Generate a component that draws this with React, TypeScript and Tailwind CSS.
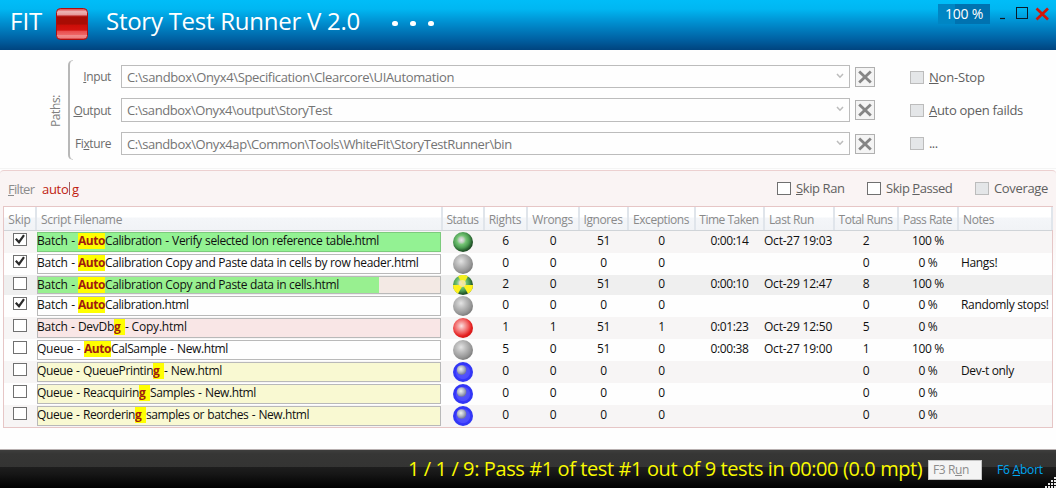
import type { ReactNode } from "react";

type Orb = "green" | "gray" | "hazard" | "red" | "blue";

interface Row {
  skip: boolean;
  pre: string;
  preCls: string;
  hit: string;
  hitCls: string;
  post: string;
  postCls: string;
  fill: string;
  box: string;
  orb: Orb;
  rights: number;
  wrongs: number;
  ignores: number;
  exceptions: number;
  time: string;
  last: string;
  total: number;
  rate: string;
  notes: string;
  bg: string;
  h: string;
}

const AUTO = "w-[27px] tracking-[-0.45px]";
const G = "w-[11px]";
const BATCH = "w-[41px] tracking-[-0.25px] [word-spacing:0.8px]";
const PLAIN = "border-[#b9b9b9] bg-[#fefefe]";
const YELLOW = "border-[#b9b9b9] bg-[#f9f9d2]";

const rows: Row[] = [
  { skip: true, pre: "Batch - ", preCls: BATCH, hit: "Auto", hitCls: AUTO, post: "Calibration - Verify selected Ion reference table.html", postCls: "tracking-[-0.39px] [word-spacing:0.7px]", fill: "", box: "border-[#7ccb7c] bg-[#93f293]", orb: "green", rights: 6, wrongs: 0, ignores: 51, exceptions: 0, time: "0:00:14", last: "Oct-27 19:03", total: 2, rate: "100 %", notes: "", bg: "bg-[#f7f5f5]", h: "h-[22px]" },
  { skip: true, pre: "Batch - ", preCls: BATCH, hit: "Auto", hitCls: AUTO, post: "Calibration Copy and Paste data in cells by row header.html", postCls: "tracking-[-0.32px]", fill: "", box: PLAIN, orb: "gray", rights: 0, wrongs: 0, ignores: 0, exceptions: 0, time: "", last: "", total: 0, rate: "0 %", notes: "Hangs!", bg: "bg-[#fefefe]", h: "h-[22px]" },
  { skip: false, pre: "Batch - ", preCls: BATCH, hit: "Auto", hitCls: AUTO, post: "Calibration Copy and Paste data in cells.html", postCls: "tracking-[-0.32px]", fill: "w-[341px]", box: "border-[#b9b9b9] bg-[#f3e9e4]", orb: "hazard", rights: 2, wrongs: 0, ignores: 51, exceptions: 0, time: "0:00:10", last: "Oct-29 12:47", total: 8, rate: "100 %", notes: "", bg: "bg-[#efefef]", h: "h-[20px]" },
  { skip: true, pre: "Batch - ", preCls: BATCH, hit: "Auto", hitCls: AUTO, post: "Calibration.html", postCls: "tracking-[-0.4px]", fill: "", box: PLAIN, orb: "gray", rights: 0, wrongs: 0, ignores: 0, exceptions: 0, time: "", last: "", total: 0, rate: "0 %", notes: "Randomly stops!", bg: "bg-[#fefefe]", h: "h-[22px]" },
  { skip: false, pre: "Batch - DevDb", preCls: "w-[77px] tracking-[-0.25px] [word-spacing:0.5px]", hit: "g ", hitCls: G, post: "- Copy.html", postCls: "tracking-[-0.2px]", fill: "", box: "border-[#b9b9b9] bg-[#f9e6e6]", orb: "red", rights: 1, wrongs: 1, ignores: 51, exceptions: 1, time: "0:01:23", last: "Oct-29 12:50", total: 5, rate: "0 %", notes: "", bg: "bg-[#f7f5f5]", h: "h-[22px]" },
  { skip: false, pre: "Queue - ", preCls: "w-[47px] tracking-[-0.25px] [word-spacing:0.7px]", hit: "Auto", hitCls: AUTO, post: "CalSample - New.html", postCls: "tracking-[-0.37px] [word-spacing:0.8px]", fill: "", box: PLAIN, orb: "gray", rights: 5, wrongs: 0, ignores: 51, exceptions: 0, time: "0:00:38", last: "Oct-27 19:00", total: 1, rate: "100 %", notes: "", bg: "bg-[#fefefe]", h: "h-[22px]" },
  { skip: false, pre: "Queue - QueuePrintin", preCls: "w-[116px] tracking-[-0.38px] [word-spacing:0.7px]", hit: "g ", hitCls: G, post: "- New.html", postCls: "tracking-[-0.36px] [word-spacing:0.5px]", fill: "", box: YELLOW, orb: "blue", rights: 0, wrongs: 0, ignores: 0, exceptions: 0, time: "", last: "", total: 0, rate: "0 %", notes: "Dev-t only", bg: "bg-[#f7f5f5]", h: "h-[22px]" },
  { skip: false, pre: "Queue - Reacquirin", preCls: "w-[102px] tracking-[-0.37px] [word-spacing:0.7px]", hit: "g ", hitCls: G, post: "Samples - New.html", postCls: "tracking-[-0.37px] [word-spacing:0.7px]", fill: "", box: YELLOW, orb: "blue", rights: 0, wrongs: 0, ignores: 0, exceptions: 0, time: "", last: "", total: 0, rate: "0 %", notes: "", bg: "bg-[#fefefe]", h: "h-[22px]" },
  { skip: false, pre: "Queue - Reorderin", preCls: "w-[98px] tracking-[-0.39px] [word-spacing:0.7px]", hit: "g ", hitCls: G, post: "samples or batches - New.html", postCls: "tracking-[-0.41px] [word-spacing:0.6px]", fill: "", box: YELLOW, orb: "blue", rights: 0, wrongs: 0, ignores: 0, exceptions: 0, time: "", last: "", total: 0, rate: "0 %", notes: "", bg: "bg-[#f7f5f5]", h: "h-[22px]" },
];

const COLS = "grid grid-cols-[32px_406px_42px_43px_52px_49px_67px_69px_70px_64px_60px_94px]";

function Check({ on = false, off = false }: { on?: boolean; off?: boolean }) {
  return (
    <span className={`block h-[13px] w-[14px] shrink-0 border ${off ? "border-[#bcbcbc] bg-[#e4e6e8]" : "border-[#707070] bg-white"}`}>
      {on && (
        <svg viewBox="0 0 12 11" className="block h-[11px] w-[12px]" fill="none" stroke="#2b2b2b" strokeWidth="2.2">
          <path d="M1.8 4.8 L5 8.2 L10 1.2" />
        </svg>
      )}
    </span>
  );
}

function OrbDefs() {
  return (
    <svg className="absolute h-0 w-0" aria-hidden="true">
      <defs>
        <radialGradient id="gray" cx="0.4" cy="0.36" r="0.65">
          <stop offset="0" stopColor="#e4e4e4" />
          <stop offset="0.35" stopColor="#c0c0c0" />
          <stop offset="0.8" stopColor="#969696" />
          <stop offset="1" stopColor="#7c7c7c" />
        </radialGradient>
        <radialGradient id="green" cx="0.42" cy="0.4" r="0.64">
          <stop offset="0" stopColor="#e8e4ec" />
          <stop offset="0.2" stopColor="#c0d0c0" />
          <stop offset="0.36" stopColor="#74c474" />
          <stop offset="0.62" stopColor="#4c9c52" />
          <stop offset="0.82" stopColor="#2a6230" />
          <stop offset="1" stopColor="#163a1c" />
        </radialGradient>
        <radialGradient id="red" cx="0.42" cy="0.4" r="0.65">
          <stop offset="0" stopColor="#fbe4e4" />
          <stop offset="0.25" stopColor="#f5a3a3" />
          <stop offset="0.55" stopColor="#f05c5c" />
          <stop offset="0.78" stopColor="#e32020" />
          <stop offset="1" stopColor="#d01212" />
        </radialGradient>
        <radialGradient id="blue" cx="0.5" cy="0.5" r="0.5">
          <stop offset="0" stopColor="#5a5af4" />
          <stop offset="0.66" stopColor="#4c4cff" />
          <stop offset="0.76" stopColor="#3434fa" />
          <stop offset="1" stopColor="#3038f0" />
        </radialGradient>
        <radialGradient id="pearl" cx="0.42" cy="0.4" r="0.6">
          <stop offset="0" stopColor="#eef4f0" />
          <stop offset="0.5" stopColor="#b8bccc" />
          <stop offset="1" stopColor="#747a98" />
        </radialGradient>
      </defs>
    </svg>
  );
}

function StatusOrb({ kind }: { kind: Orb }) {
  return (
    <svg viewBox="0 0 20 20" className="block h-[20px] w-[20px]">
      <circle cx="10" cy="10" r="10" fill={`url(#${kind === "hazard" ? "green" : kind})`} />
      {kind === "blue" && <circle cx="8.6" cy="8" r="4.8" fill="url(#pearl)" />}
      {kind === "hazard" && (
        <g>
          <path d="M10 10 L5 1.34 A10 10 0 0 1 15 1.34 Z" fill="#f4f020" />
          <path d="M10 10 L20 10 A10 10 0 0 1 15 18.66 Z" fill="#fff21c" />
          <path d="M10 10 L0 10 A10 10 0 0 0 5 18.66 Z" fill="#fff21c" />
          <circle cx="9.4" cy="8.5" r="3.4" fill="#f4e6a8" opacity="0.85" />
        </g>
      )}
    </svg>
  );
}

function PathRow({ label, value, tracking, box, cls }: { label: ReactNode; value: string; tracking: string; box: string; cls: string }) {
  return (
    <div className={`flex items-center ${cls}`}>
      <div className="w-[38px] pt-px text-right text-[12px] leading-[16px] tracking-[-0.4px] whitespace-nowrap text-[#6c6c6c]">{label}</div>
      <div className={`ml-[10px] flex w-[729px] items-center justify-between border border-[#bcbcbc] bg-[#fefefe] pr-[5px] pl-[5px] ${box}`}>
        <span className={`text-[13px] leading-[18px] whitespace-nowrap text-[#747474] ${tracking}`}>{value}</span>
        <svg viewBox="0 0 8 6" className="mb-[2px] h-[6px] w-[8px]" fill="none" stroke="#bcbcbc" strokeWidth="1.5">
          <path d="M1 1 L4 4.2 L7 1" />
        </svg>
      </div>
      <div className="ml-[5px] flex h-[20px] w-[20px] items-center justify-center border border-[#b0b0b0] bg-[#f4f4f4]">
        <svg viewBox="0 0 14 14" className="h-[14px] w-[14px]" stroke="#858585" strokeWidth="2.8">
          <path d="M1.2 1.4 L12.8 12.6 M12.8 1.4 L1.2 12.6" />
        </svg>
      </div>
    </div>
  );
}

const heads: [string, string][] = [
  ["Skip", "tracking-[-0.2px]"],
  ["Script Filename", "tracking-[-0.32px]"],
  ["Status", "tracking-[-0.45px]"],
  ["Rights", "tracking-[-0.3px]"],
  ["Wrongs", "tracking-[-0.4px]"],
  ["Ignores", "tracking-[-0.4px]"],
  ["Exceptions", "tracking-[-0.44px]"],
  ["Time Taken", "tracking-[-0.5px]"],
  ["Last Run", "tracking-[-0.4px]"],
  ["Total Runs", "tracking-[-0.48px]"],
  ["Pass Rate", "tracking-[-0.5px]"],
  ["Notes", "tracking-[-0.4px]"],
];

function Num({ children }: { children: ReactNode }) {
  return <div className="pb-[2px] text-center tracking-[-0.35px]">{children}</div>;
}

export default function App() {
  return (
    <div className="flex h-[488px] w-[1056px] flex-col overflow-hidden bg-[#fefefe] font-['Open_Sans','Segoe_UI',sans-serif] text-[12px]">
      <OrbDefs />

      <header className="flex h-[50px] shrink-0 items-start bg-[linear-gradient(#00bdf8_0%,#00b7f2_18%,#008fd0_45%,#0062a4_78%,#00447f_100%)] text-white">
        <div className="ml-[10px] w-[46px] pt-[4px] text-[24px] leading-[33px]">FIT</div>
        <svg viewBox="0 0 32 32" className="mt-[8px] h-[32px] w-[32px]">
          <defs>
            <linearGradient id="stop" x1="0" y1="0" x2="0" y2="1">
              <stop offset="0" stopColor="#d85050" />
              <stop offset="0.04" stopColor="#e06060" />
              <stop offset="0.1" stopColor="#ecb4b4" />
              <stop offset="0.2" stopColor="#e69a9a" />
              <stop offset="0.24" stopColor="#c43030" />
              <stop offset="0.27" stopColor="#a80c04" />
              <stop offset="0.5" stopColor="#a80c04" />
              <stop offset="0.54" stopColor="#cc0e08" />
              <stop offset="0.7" stopColor="#d41410" />
              <stop offset="0.73" stopColor="#e84c4c" />
              <stop offset="0.84" stopColor="#ee6464" />
              <stop offset="0.86" stopColor="#f08c8c" />
              <stop offset="0.94" stopColor="#f08080" />
              <stop offset="1" stopColor="#c02020" />
            </linearGradient>
          </defs>
          <rect x="0.5" y="0.5" width="31" height="31" rx="4" fill="url(#stop)" stroke="#b00d0d" />
        </svg>
        <div className="ml-[18px] pt-[4px] text-[24px] leading-[33px] tracking-[-0.26px] whitespace-nowrap">Story Test Runner V 2.0</div>
        <div className="mt-[21px] ml-[32px] flex gap-[12px]">
          <span className="h-[5px] w-[6px] rounded-full bg-white" />
          <span className="h-[5px] w-[6px] rounded-full bg-white" />
          <span className="h-[5px] w-[6px] rounded-full bg-white" />
        </div>
        <div className="mt-[4px] ml-auto flex h-[20px] w-[52px] items-center justify-center bg-[linear-gradient(90deg,#0086c4_0,#0086c4_17px,#0072b0_17px)] text-[14px] leading-[20px] tracking-[-0.25px] whitespace-nowrap">100 %</div>
        <svg viewBox="0 0 50 14" className="mt-[7px] mr-[7px] ml-[9px] h-[14px] w-[50px]" fill="none">
          <path d="M1 11.5 H6" stroke="#101820" strokeWidth="1.2" />
          <rect x="17.5" y="0.5" width="11" height="11" stroke="#0a1c2a" />
          <path d="M37.5 1.5 L49 12.5 M49 1.5 L37.5 12.5" stroke="#d01608" strokeWidth="2.7" />
        </svg>
      </header>

      <section className="flex h-[119px] shrink-0 border-b border-[#f4f4f4] pt-[10px] text-[#6c6c6c]">
        <div className="mt-[34px] ml-[47px] h-[34px] w-[17px] rotate-180 text-center text-[12px] leading-[17px] tracking-[-0.4px] text-[#808080] [writing-mode:vertical-rl]">Paths:</div>
        <div className="ml-[4px] h-[100px] w-[5px] rounded-l-[5px] border-y border-l-2 border-[#b8b8b8] border-y-[#d0d0d0]" />
        <div className="flex flex-col pt-[5px]">
          <PathRow cls="h-[23px]" box="h-[23px]" tracking="tracking-[-0.35px]" label={<><u>I</u>nput</>} value={"C:\\sandbox\\Onyx4\\Specification\\Clearcore\\UIAutomation"} />
          <PathRow cls="mt-[10px] h-[24px]" box="h-[24px]" tracking="tracking-[-0.43px]" label={<><u>O</u>utput</>} value={"C:\\sandbox\\Onyx4\\output\\StoryTest"} />
          <PathRow cls="mt-[10px] h-[23px]" box="h-[23px]" tracking="tracking-[-0.41px]" label={<>Fi<u>x</u>ture</>} value={"C:\\sandbox\\Onyx4ap\\Common\\Tools\\WhiteFit\\StoryTestRunner\\bin"} />
        </div>
        <div className="ml-[35px] flex flex-col gap-[15px] pt-[8px] text-[13px] leading-[18px] text-[#606060]">
          <div className="flex h-[18px] items-center gap-[5px] tracking-[-0.2px]"><Check off /><span><u>N</u>on-Stop</span></div>
          <div className="flex h-[18px] items-center gap-[5px] tracking-[-0.3px]"><Check off /><span><u>A</u>uto open failds</span></div>
          <div className="flex h-[18px] items-center gap-[5px] tracking-[-0.6px]"><Check off /><span>...</span></div>
        </div>
      </section>

      <section className="mt-[1px] flex h-[280px] shrink-0 flex-col rounded-t-[4px] border-t border-[#ecd0d0] bg-[linear-gradient(#faf4f4_0,#faf4f4_60px,#fefefe_110px)]">
        <div className="flex h-[35px] items-center pr-[8px] pl-[8px] text-[13px] leading-[18px] text-[#606060]">
          <span className="w-[34px] tracking-[-0.7px] text-[#8c8c8c]"><u>F</u>ilter</span>
          <span className="flex text-[13px] whitespace-nowrap text-[#c01c10]">
            <span className="w-[27px] tracking-[-0.3px]">auto</span>
            <span className="mr-[2px] h-[13px] w-px self-center bg-[#a06060]" />
            <span>g</span>
          </span>
          <div className="mb-[1px] ml-auto flex items-center">
            <div className="flex w-[90px] items-center gap-[5px] tracking-[-0.4px]"><Check /><span><u>S</u>kip Ran</span></div>
            <div className="flex w-[108px] items-center gap-[5px] tracking-[-0.45px]"><Check /><span>Skip <u>P</u>assed</span></div>
            <div className="flex w-[73px] items-center gap-[5px] tracking-[-0.34px]"><Check off /><span>Coverage</span></div>
          </div>
        </div>

        <div className="ml-[3px] h-[222px] w-[1050px] border border-[#e6c6c6] bg-[#fefefe]">
          <div className={`${COLS} h-[24px] border-b border-[#d0d4d8] bg-[linear-gradient(#ffffff_0,#ffffff_10px,#f4f6f9_11px,#f1f3f6_100%)] text-[#8a8a8a]`}>
            {heads.map(([t, cls], i) => (
              <div
                key={t}
                className={`relative -mr-px flex items-center border-r-2 border-[#e0e5eb] pt-[2px] leading-[16px] whitespace-nowrap ${cls} ${i === 1 || i === 8 || i === 11 ? "justify-start pl-[5px]" : "justify-center"} ${i === 11 ? "border-r-0" : ""}`}
              >
                {t}
              </div>
            ))}
          </div>
          {rows.map((r, i) => {
            const short = r.h === "h-[20px]";
            return (
              <div key={i} className={`${COLS} ${r.h} ${r.bg} items-center text-[12px] leading-[18px] whitespace-nowrap text-[#101010]`}>
                <div className={`flex justify-center ${short ? "pb-[3px]" : "pb-[5px]"}`}><Check on={r.skip} /></div>
                <div className={`relative ml-px flex w-[404px] items-stretch border ${short ? "h-[18px]" : "h-[20px]"} ${r.box}`}>
                  {r.fill && <div className={`absolute inset-y-0 left-0 bg-[#98f090] ${r.fill}`} />}
                  <div className={`relative -ml-px flex items-center ${short ? "" : "pb-[2px]"}`}>
                    <span className={`whitespace-pre ${r.preCls}`}>{r.pre}</span>
                    <span className={`h-[16px] overflow-hidden bg-[#ffff00] leading-[16px] font-bold whitespace-pre text-[#a01c10] ${r.hitCls}`}>{r.hit}</span>
                    <span className={r.postCls}>{r.post}</span>
                  </div>
                </div>
                <div className="flex justify-center"><StatusOrb kind={r.orb} /></div>
                <Num>{r.rights}</Num>
                <Num>{r.wrongs}</Num>
                <Num>{r.ignores}</Num>
                <Num>{r.exceptions}</Num>
                <Num>{r.time}</Num>
                <div className="pb-[2px] tracking-[-0.22px]">{r.last}</div>
                <Num>{r.total}</Num>
                <Num>{r.rate}</Num>
                <div className="pb-[2px] pl-[3px] tracking-[-0.34px]">{r.notes}</div>
              </div>
            );
          })}
        </div>
      </section>

      <footer className="relative -mt-px flex h-[39px] shrink-0 items-center border-t border-[#b8b0b0] bg-[linear-gradient(#3e3e3d_0,#363635_4px,#343433_17px,#1e1e1e_17px,#161616_24px,#000000_38px)]">
        <div className="ml-[408px] w-[520px] pb-px text-[20px] leading-[28px] tracking-[-0.4px] whitespace-nowrap text-[#fafa00]">1 / 1 / 9: Pass #1 of test #1 out of 9 tests in 00:00 (0.0 mpt)</div>
        <div className="mt-px flex h-[20px] w-[54px] items-center border border-[#c4c4c4] bg-[#f4f4f4] pl-[4px] leading-[16px] tracking-[-0.38px] whitespace-nowrap text-[#8c8c8c]"><span>F3 R<u>u</u>n</span></div>
        <div className="mt-[2px] ml-[15px] leading-[16px] tracking-[-0.2px] whitespace-nowrap text-[#00a8f4]">F6 <u>A</u>bort</div>
        <svg viewBox="0 0 12 12" className="absolute right-0 bottom-0 h-[12px] w-[12px]" fill="#e8e8e8">
          {[[9, 0], [6, 3], [9, 3], [3, 6], [6, 6], [9, 6], [0, 9], [3, 9], [6, 9], [9, 9]].map(([x, y]) => (
            <rect key={`${x}-${y}`} x={x + 1} y={y + 1} width="2" height="2" />
          ))}
        </svg>
      </footer>
    </div>
  );
}
